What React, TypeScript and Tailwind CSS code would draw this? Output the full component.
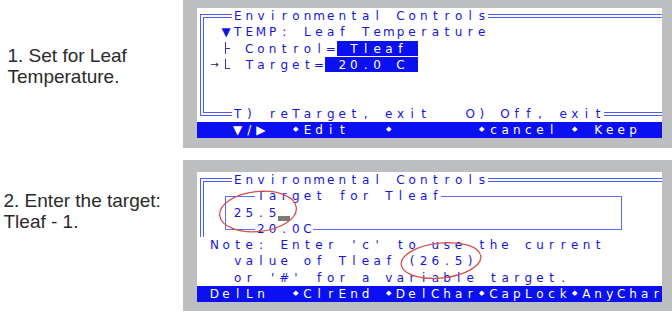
type RowSpec = { text: string; hl?: [number, number]; bar?: boolean };

const TEXT = 'text-[#1414e0]';

// line pieces drawn inside one character cell
const DBL: Record<string, string[]> = {
  '═': ['left-0 right-0 top-[6px] h-px', 'left-0 right-0 top-[9px] h-px'],
  '╔': [
    'left-[3px] right-0 top-[6px] h-px',
    'left-[3px] top-[6px] bottom-0 w-px',
    'left-[6px] right-0 top-[9px] h-px',
    'left-[6px] top-[9px] bottom-0 w-px',
  ],
  '║': ['left-[3px] top-0 bottom-0 w-px', 'left-[6px] top-0 bottom-0 w-px'],
  '╚': [
    'left-[3px] top-0 h-[10px] w-px',
    'left-[3px] right-0 top-[9px] h-px',
    'left-[6px] top-0 h-[7px] w-px',
    'left-[6px] right-0 top-[6px] h-px',
  ],
};

const SGL: Record<string, string[]> = {
  '─': ['left-0 right-0 top-[8px] h-px'],
  '┌': ['left-[5px] right-0 top-[8px] h-px', 'left-[5px] top-[8px] bottom-0 w-px'],
  '┐': ['left-0 w-[6px] top-[8px] h-px', 'left-[5px] top-[8px] bottom-0 w-px'],
  '│': ['left-[5px] top-0 bottom-0 w-px'],
  '└': ['left-[5px] top-0 h-[9px] w-px', 'left-[5px] right-0 top-[8px] h-px'],
  '┘': ['left-[5px] top-0 h-[9px] w-px', 'left-0 w-[6px] top-[8px] h-px'],
};

const TREE: Record<string, string[]> = {
  '├': ['left-[5px] top-[1px] h-[12px] w-px', 'left-[5px] w-[5px] top-[7px] h-px'],
  '┖': ['left-[5px] top-[2px] h-[10px] w-px', 'left-[5px] w-[5px] top-[11px] h-px'],
};

function Cell({ ch, inv, bar }: { ch: string; inv: boolean; bar: boolean }) {
  let pieces: React.ReactNode = null;
  let glyph: React.ReactNode = null;
  const light = bar || inv;

  if (DBL[ch]) {
    pieces = DBL[ch].map((c, i) => <span key={i} className={`absolute bg-[#4d5cff] ${c}`} />);
  } else if (SGL[ch]) {
    pieces = SGL[ch].map((c, i) => <span key={i} className={`absolute bg-[#5b69ff] ${c}`} />);
  } else if (TREE[ch]) {
    pieces = TREE[ch].map((c, i) => <span key={i} className={`absolute bg-[#3838b0] ${c}`} />);
  } else if (ch === '█') {
    pieces = <span className="absolute left-0 right-0 bottom-0 h-[5px] bg-[#7a7a7a]" />;
  } else if (ch === '→') {
    glyph = <span className="relative text-[10px] text-[#1e1e5a]">→</span>;
  } else if (ch === '◆') {
    glyph = <span className={`relative text-[7px] ${light ? 'text-white' : TEXT}`}>◆</span>;
  } else if (ch !== ' ') {
    glyph = <span className={`relative ${light ? 'text-white' : TEXT}`}>{ch}</span>;
  }

  return (
    <div className="relative w-[11.625px] h-full flex items-center justify-center">
      {inv && <span className="absolute left-0 right-0 top-0 h-[15px] bg-[#0a10f0]" />}
      {pieces}
      {glyph}
    </div>
  );
}

function Row({ spec }: { spec: RowSpec }) {
  const chars = Array.from(spec.text.padEnd(40, ' ')).slice(0, 40);
  return (
    <div className={`flex h-[16.25px] ${spec.bar ? 'bg-[#0a10f0]' : ''}`}>
      {chars.map((ch, i) => (
        <Cell
          key={i}
          ch={ch}
          bar={!!spec.bar}
          inv={!!spec.hl && i >= spec.hl[0] && i <= spec.hl[1]}
        />
      ))}
    </div>
  );
}

function Screen({ rows, children }: { rows: RowSpec[]; children?: React.ReactNode }) {
  return (
    <div className="relative w-[465px] h-[130px] bg-white font-['DejaVu_Sans',sans-serif] text-[12px] leading-none overflow-hidden">
      {rows.map((r, i) => (
        <Row key={i} spec={r} />
      ))}
      {children}
    </div>
  );
}

const TOP = '╔══Environmental Controls═══════════════';

const screen1: RowSpec[] = [
  { text: TOP },
  { text: '║ ▼TEMP: Leaf Temperature' },
  { text: '║ ├ Control= Tleaf ', hl: [12, 18] },
  { text: '║→┖ Target= 20.0 C ', hl: [11, 18] },
  { text: '║' },
  { text: '║' },
  { text: '╚══T) reTarget, exit   O) Off, exit═════' },
  { text: '   ▼/▶  ◆Edit   ◆       ◆cancel ◆ Keep  ', bar: true },
];

const screen2: RowSpec[] = [
  { text: TOP },
  { text: '║ ┌──Target for Tleaf───────────────┐   ' },
  { text: '║ │25.5█                            │   ' },
  { text: '║ └──20.0C──────────────────────────┘   ' },
  { text: " Note: Enter 'c' to use the current" },
  { text: '   value of Tleaf (26.5)' },
  { text: "   or '#' for a variable target." },
  { text: ' DelLn  ◆ClrEnd ◆DelChar◆CapLock◆AnyChar', bar: true },
];

export default function App() {
  return (
    <div className="w-[672px] h-[315px] bg-white overflow-hidden flex flex-col font-['Liberation_Sans',Arial,sans-serif]">
      {/* step 1 */}
      <div className="flex h-[148px]">
        <div className="w-[183px] pt-[44.5px] pl-[7.5px] text-[19px] leading-[21.5px] text-[#2a2a2a]">
          1. Set for Leaf
          <br />
          Temperature.
        </div>
        <div className="flex-1 bg-[#bdbec0] pl-[14px] pt-[8px]">
          <Screen rows={screen1} />
        </div>
      </div>

      {/* step 2 */}
      <div className="flex h-[151px] mt-[12px]">
        <div className="w-[183px] pt-[30px] pl-[3.5px] text-[19px] leading-[21px] text-[#2a2a2a]">
          2. Enter the target:
          <br />
          Tleaf - 1.
        </div>
        <div className="flex-1 bg-[#bdbec0] pl-[14px] pt-[12px]">
          <Screen rows={screen2}>
            <svg className="absolute inset-0 pointer-events-none" width="465" height="130" viewBox="0 0 465 130">
              <ellipse
                cx="61"
                cy="39.5"
                rx="38.5"
                ry="20"
                fill="none"
                stroke="#d4504a"
                strokeWidth="1.3"
                transform="rotate(-6 61 39.5)"
              />
              <ellipse
                cx="244"
                cy="88.5"
                rx="40"
                ry="17.5"
                fill="none"
                stroke="#d4504a"
                strokeWidth="1.3"
                transform="rotate(-6 244 88.5)"
              />
            </svg>
          </Screen>
        </div>
      </div>
    </div>
  );
}
